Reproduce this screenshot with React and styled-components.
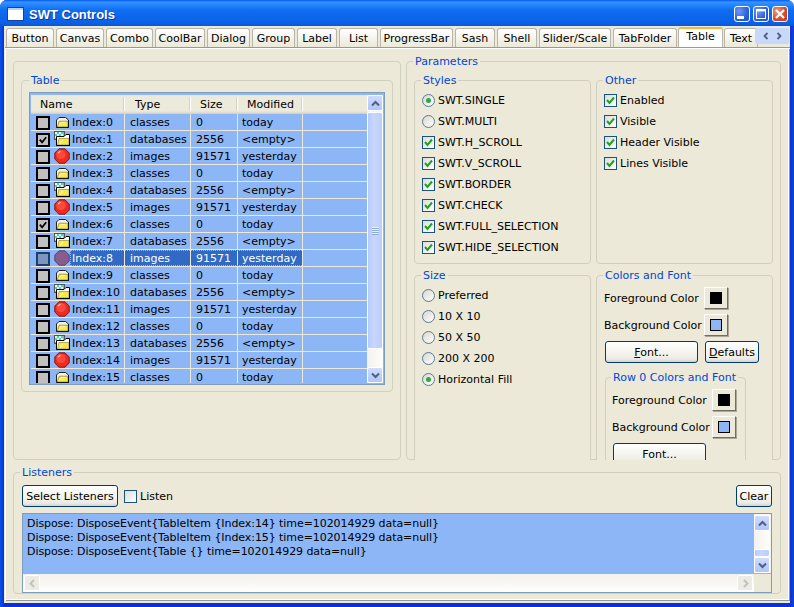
import React from 'react';
import styled, { createGlobalStyle } from 'styled-components';

const Global = createGlobalStyle`
  html, body { margin: 0; padding: 0; background: #fff; }
  body { width: 794px; height: 607px; overflow: hidden; font: 11px/13px "DejaVu Sans", sans-serif; color: #000; }
  * { box-sizing: border-box; }
`;

const Window = styled.div`
  width: 794px; height: 607px; display: flex; flex-direction: column;
  background: linear-gradient(90deg, #0a55e4 0, #0831d9 4px, #0831d9 790px, #0a45d0 100%);
  border-radius: 7px 7px 0 0; overflow: hidden;
`;
const TitleBar = styled.div`
  height: 26px; flex: none; display: flex; align-items: center; padding: 1px 6px 0 7px;
  background: linear-gradient(180deg, #0058ee 0, #3a93ff 8%, #2a8cff 14%, #0f6cf0 40%, #0a63ea 80%, #0b5fe0 92%, #0a55d6 100%);
`;
const TitleText = styled.div`
  font: bold 13px/16px "Liberation Sans", sans-serif; color: #fff; margin: 2px 0 0 5px; text-shadow: 1px 1px 0 #0f3a9c; flex: 1;
`;
const WinButton = styled.div`
  width: 16px; height: 16px; margin-left: ${p => p.$ml}px; border: 1px solid #fff; border-radius: 3px; display: flex;
  background: ${p => p.$close ? 'radial-gradient(circle at 30% 30%, #ef9a7a, #d8482a 60%, #c13a1a)' : 'radial-gradient(circle at 30% 30%, #6f98f5, #2a5fe0 60%, #2450c8)'};
  svg { width: 14px; height: 14px; }
`;
const Client = styled.div`
  flex: 1; margin: 0 4px 4px; background: #ece9d8; display: flex; flex-direction: column; min-height: 0;
`;
const TabRow = styled.div`
  position: relative; height: 21px; flex: none; display: flex; align-items: flex-end; padding-left: 2px; overflow: hidden;
`;
const Tab = styled.div`
  flex: none; width: ${p => p.$w}px; height: ${p => p.$active ? 21 : 19}px; text-align: center; line-height: ${p => p.$active ? 16 : 20}px; white-space: nowrap;
  margin-right: ${p => p.$active ? 1 : 2}px; margin-left: ${p => p.$active ? -1 : 0}px; border-radius: 3px 3px 0 0;
  border: 1px solid #b8b6a8; border-bottom: none; position: relative; z-index: ${p => p.$active ? 1 : 0};
  background: ${p => p.$active ? '#fff' : 'linear-gradient(180deg, #fff 0, #f7f6f0 40%, #ece9d8 100%)'};
  ${p => p.$active && 'border-top: 2px solid #f7b436; border-color: #f7b436 #b8b6a8 #fff; height: 20px;'}
`;
const TabScroll = styled.div`
  position: absolute; right: 1px; top: 2px; width: 34px; height: 16px; background: #c8d8fb; display: flex; align-items: center; justify-content: space-around; padding: 0 4px; z-index: 2; border-radius: 2px;
  svg { width: 6px; height: 8px; }
`;
const Panel = styled.div`
  flex: 1; margin-left: 1px; width: 785px; border-top: 1px solid #919b9c; box-shadow: inset 1px 1px 0 #fff, inset -1px -1px 0 #919b9c, inset -2px -2px 0 #fff;
  padding: 7px 0 0 8px; display: flex; flex-direction: column; margin-bottom: 2px;
`;
const TopArea = styled.div`
  display: flex; gap: 5px; height: 405px; flex: none;
`;
const Frame = styled.div`
  width: 388px; height: 399px; margin-top: 6px; border: 1px solid #d0d0bf; border-radius: 4px; padding: 12px 7px 0;
`;
const Group = styled.fieldset`
  margin: 0 0 0 ${p => p.$ml || 0}px; min-width: 0; border: 1px solid #d0d0bf; border-radius: 4px; background: #ece9d8;
  width: ${p => p.$w}px; height: ${p => p.$h}px; padding: ${p => p.$pad || '3px 7px 0'};
`;
const Legend = styled.legend`
  padding: 0 2px; margin-left: ${p => p.$lx ?? -1}px; color: #0046d5; line-height: 13px; white-space: nowrap;
`;
const ParamClip = styled.div`
  display: grid; grid-template-columns: 177px 177px; grid-template-rows: 190px auto; column-gap: 5px; row-gap: 5px; height: 386px; overflow: hidden; position: relative;
`;

const TableBox = styled.div`
  width: 356px; height: 293px; border: 1px solid #7f9db9; padding: 2px 1px 1px; background: #8db6f6; display: flex;
`;
const TableCol = styled.div`
  width: 336px; display: flex; flex-direction: column; overflow: hidden; height: 288px;
`;
const HeadRow = styled.div`
  height: 19px; flex: none; display: grid; grid-template-columns: 94px 66px 47px 65px 1fr; background: #ebeadb; box-shadow: inset 0 -1px 0 #d6d2c2, inset 0 -2px 0 #e2decd, inset 0 -3px 0 #e8e5d5;
`;
const HeadCell = styled.div`
  padding: 3px 0 0 ${p => p.$pl}px; line-height: 14px; position: relative;
  &::after { content: ''; position: absolute; right: 0; top: 2px; height: 14px; width: 2px; background: linear-gradient(90deg, #d5d2c1 50%, #fff 50%); display: ${p => p.$last ? 'none' : 'block'}; }
`;
const Row = styled.div`
  height: 17px; flex: none; display: grid; grid-template-columns: 94px 66px 47px 65px 1fr; border-bottom: 1px solid #ece9d8; position: relative;
  &::after { content: ''; position: absolute; left: 39px; width: 234px; top: 0; bottom: 0; border: 1px dotted #e8a838; display: ${p => p.$sel ? 'block' : 'none'}; pointer-events: none; }
`;
const NameCell = styled.div`
  display: flex; align-items: center; padding-left: 5px; border-right: 1px solid #ece9d8;
`;
const TableCheck = styled.div`
  width: 14px; height: 14px; flex: none; margin: 2px 4px 0 0; border: 2px solid ${p => p.$sel ? '#1b3f6e' : '#000'}; background: ${p => p.$sel ? '#7b97be' : '#c0c0c0'}; display: flex;
  svg { width: 10px; height: 10px; }
`;
const IconBox = styled.div`
  width: 16px; height: 16px; flex: none;
  svg { display: block; width: 16px; height: 16px; }
`;
const NameText = styled.div`
  flex: 1; height: 16px; line-height: 18px; padding-left: 2px; background: ${p => p.$sel ? '#316ac5' : 'none'}; color: ${p => p.$sel ? '#fff' : '#000'}; white-space: nowrap;
`;
const Cell = styled.div`
  line-height: 18px; height: 16px; padding-left: ${p => p.$pl}px; border-right: ${p => p.$last ? 'none' : '1px solid #ece9d8'}; white-space: nowrap;
  background: ${p => p.$sel ? '#316ac5' : 'none'}; color: ${p => p.$sel ? '#fff' : '#000'};
`;

const VBar = styled.div`
  width: 16px; display: flex; flex-direction: column; background: #f4f3ee;
`;
const ScrollBtn = styled.div`
  width: ${p => p.$s || 16}px; height: 16px; flex: none; border: 1px solid #fff; border-radius: 2px; display: flex; align-items: center; justify-content: center;
  background: ${p => p.$off ? '#ecebe4' : 'linear-gradient(180deg, #cfdcfd, #b0c6f8)'};
  svg { width: 9px; height: 7px; }
`;
const VThumb = styled.div`
  height: ${p => p.$h}px; margin-top: ${p => p.$mt ?? 1}px; flex: none; border: 1px solid #fff; border-radius: 2px; background: linear-gradient(90deg, #b6cafa, #c6d6fc 40%, #bccffa); display: flex; align-items: center; justify-content: center;
`;
const Grip = styled.div`
  width: 7px; height: 8px; background: repeating-linear-gradient(180deg, #eef2fe 0 1px, #8ea8dc 1px 2px);
`;
const VTrack = styled.div`
  flex: 1; background: linear-gradient(90deg, #f3f1ec, #fdfdfb);
`;

const OptRow = styled.div`
  height: 21px; display: flex; align-items: center; gap: 3px; white-space: nowrap;
`;
const CheckBox = styled.div`
  width: 13px; height: 13px; flex: none; border: 1px solid #1c5180; background: linear-gradient(135deg, #dcdcd7, #fff); display: flex;
  svg { width: 11px; height: 11px; }
`;
const RadioDot = styled.div`
  width: 13px; height: 13px; flex: none; border-radius: 50%; border: 1px solid #5a7a9c; background: linear-gradient(135deg, #d8d6cc, #fff); display: flex; align-items: center; justify-content: center;
  &::after { content: ''; width: 5px; height: 5px; border-radius: 50%; background: #2fa84a; display: ${p => p.$on ? 'block' : 'none'}; }
`;

const ColorRow = styled.div`
  height: 22px; display: flex; align-items: center; margin-bottom: 5px;
`;
const ColorLabel = styled.div`
  width: 100px; flex: none; white-space: nowrap;
`;
const SwatchBtn = styled.div`
  width: 24px; height: 22px; background: #ece9d8; border: 1px solid; border-color: #fff #716f64 #716f64 #fff; box-shadow: 1px 1px 0 #aca899; display: flex; align-items: center; justify-content: center;
`;
const Swatch = styled.div`
  width: 12px; height: 12px; border: 1px solid #000; background: ${p => p.$c};
`;
const PushBtn = styled.div`
  flex: none; width: ${p => p.$w}px; height: 22px; border: 1px solid #003c74; border-radius: 3px; text-align: center; line-height: 21px; margin-left: ${p => p.$ml || 0}px; white-space: nowrap;
  background: linear-gradient(180deg, #fff 0, #f5f4ee 50%, #ecebe3 85%, #d6d0c5 100%);
`;
const BtnRow = styled.div`
  display: flex; height: 22px; margin: 0 0 8px 1px; gap: 7px;
`;
const U = styled.span` text-decoration: underline; `;

const ListenBar = styled.div`
  display: flex; align-items: center; height: 22px; margin-bottom: 6px;
`;
const ListenLabel = styled.label`
  display: flex; align-items: center; gap: 3px; margin-left: 6px; flex: 1;
`;
const LogBox = styled.div`
  width: 750px; height: 80px; border: 1px solid #7f9db9; display: grid; grid-template-columns: 731px 17px; grid-template-rows: 60px 18px; background: #ece9d8;
`;
const LogText = styled.div`
  background: #8db6f6; padding: 3px 0 0 4px; line-height: 14px; white-space: pre; overflow: hidden; letter-spacing: -.07px;
`;
const LogV = styled.div`
  background: #f4f3ee; display: flex; flex-direction: column; padding: 1px 1px 0 0; border-bottom: 1px solid #8db6f6; background-clip: padding-box;
`;
const HBar = styled.div`
  display: flex; justify-content: space-between; align-items: center; padding: 1px; background: linear-gradient(180deg, #f3f1ec 0, #f8f7f3 50%, #fff 100%);
`;
const CornerFill = styled.div``;

const Chev = ({ d, c = '#4d6185' }) => (
  <svg viewBox="0 0 9 7"><polyline points={d} fill="none" stroke={c} strokeWidth="2" /></svg>
);
const UP = '1,5.5 4.5,2 8,5.5';
const DOWN = '1,1.5 4.5,5 8,1.5';

const Tick = ({ c = '#21a121', w = 2 }) => (
  <svg viewBox="0 0 11 11"><polyline points="2,5 4.5,8 9,2.5" fill="none" stroke={c} strokeWidth={w} /></svg>
);

const Folder = () => (
  <svg viewBox="0 0 16 16">
    <path d="M2.5 13.5 V6 L5 3.5 H11.5 L14.5 6 V13.5 Z" fill="#f4f2e6" stroke="#222" />
    <path d="M3.2 13 L5.2 7.2 H14 V13 Z" fill="#f7ea4c" stroke="#8a7a20" strokeWidth=".7" />
    <path d="M5 12 L7 8.5 H11" fill="none" stroke="#fff9a8" />
    <path d="M14.5 6 V13.5 H2.5" fill="none" stroke="#111" />
  </svg>
);
const DbFolder = () => (
  <svg viewBox="0 0 16 16">
    <rect x=".5" y=".5" width="10" height="8" fill="#4fc8f0" stroke="#555" />
    <path d="M1 1h2v2h-2zM5 1h2v2h-2zM3 3h2v2h-2zM7 3h2v2h-2zM1 5h2v2h-2zM5 5h2v2h-2z" fill="#e8ffc0" />
    <path d="M2.5 5.5 H10 L12 3.5 H15.5 V14.5 H2.5 Z" fill="#fff" stroke="#000" />
    <path d="M3.5 14 L5 7.5 H15 V14 Z" fill="#f6e84a" stroke="#8a7a20" strokeWidth=".6" />
    <path d="M6 13 L9 8.5" stroke="#fff9a8" strokeWidth="1.2" />
    <path d="M15.5 4 V14.5 H2.5" fill="none" stroke="#000" />
  </svg>
);
const Ball = ({ sel }) => (
  <svg viewBox="0 0 16 16">
    <path d="M5 .8 H11 L15.2 5 V11 L11 15.2 H5 L.8 11 V5 Z" fill={sel ? '#8a5c8c' : '#f02a20'} stroke={sel ? '#4a4a80' : '#7a1a1a'} strokeWidth="1" />
    {!sel && <circle cx="7" cy="6.5" r="4.6" fill="#ff4a3a" />}
    {!sel && <path d="M4 5 L6.5 3" stroke="#ffb0a0" strokeWidth="1.2" />}
  </svg>
);
const kinds = [
  { Icon: Folder, type: 'classes', size: '0', mod: 'today' },
  { Icon: DbFolder, type: 'databases', size: '2556', mod: '<empty>' },
  { Icon: Ball, type: 'images', size: '91571', mod: 'yesterday' },
];
const checked = [1, 6];
const rows = Array.from({ length: 16 }, (_, i) => ({ i, ...kinds[i % 3] }));

const tabs = [
  ['Button', 48], ['Canvas', 48], ['Combo', 47], ['CoolBar', 50], ['Dialog', 43], ['Group', 43], ['Label', 40], ['List', 39],
  ['ProgressBar', 73], ['Sash', 40], ['Shell', 40], ['Slider/Scale', 72], ['TabFolder', 64], ['Table', 45, true], ['Text', 34],
];

const Check = ({ label }) => (
  <OptRow><CheckBox><Tick /></CheckBox>{label}</OptRow>
);
const Radio = ({ label, on }) => (
  <OptRow><RadioDot $on={on} />{label}</OptRow>
);
const ColorLine = ({ label, color }) => (
  <ColorRow>
    <ColorLabel>{label}</ColorLabel>
    <SwatchBtn><Swatch $c={color} /></SwatchBtn>
  </ColorRow>
);

export default function App() {
  return (
    <Window>
      <Global />
      <TitleBar>
        <svg width="17" height="14" viewBox="0 0 17 14">
          <rect x=".5" y=".5" width="16" height="13" fill="#fff" stroke="#1a3f9c" />
          <rect x="1" y="1" width="15" height="2" fill="#b8d0f8" />
        </svg>
        <TitleText>SWT Controls</TitleText>
        <WinButton $ml={0}>
          <svg viewBox="0 0 14 14"><rect x="2" y="9" width="7" height="3" fill="#fff" /></svg>
        </WinButton>
        <WinButton $ml={3}>
          <svg viewBox="0 0 14 14"><rect x="2.5" y="3" width="9" height="8.5" fill="none" stroke="#fff" /><rect x="2" y="2" width="10" height="2.4" fill="#fff" /></svg>
        </WinButton>
        <WinButton $ml={3} $close>
          <svg viewBox="0 0 14 14"><path d="M3 3 L11 11 M11 3 L3 11" stroke="#fff" strokeWidth="2.2" /></svg>
        </WinButton>
      </TitleBar>
      <Client>
        <TabRow>
          {tabs.map(([t, w, a]) => <Tab key={t} $w={w} $active={a}>{t}</Tab>)}
          <TabScroll>
            <svg viewBox="0 0 8 10"><polyline points="6,1 2,5 6,9" fill="none" stroke="#4d6185" strokeWidth="2.4" /></svg>
            <svg viewBox="0 0 8 10"><polyline points="2,1 6,5 2,9" fill="none" stroke="#4d6185" strokeWidth="2.4" /></svg>
          </TabScroll>
        </TabRow>
        <Panel>
          <TopArea>
            <Frame>
              <Group $w={372} $h={318} $pad="5px 7px 0">
                <Legend $lx={0}>Table</Legend>
                <TableBox>
                  <TableCol>
                    <HeadRow>
                      <HeadCell $pl={9}>Name</HeadCell>
                      <HeadCell $pl={10}>Type</HeadCell>
                      <HeadCell $pl={9}>Size</HeadCell>
                      <HeadCell $pl={9}>Modified</HeadCell>
                      <HeadCell $last />
                    </HeadRow>
                    {rows.map(({ i, Icon, type, size, mod }) => {
                      const sel = i === 8;
                      return (
                        <Row key={i} $sel={sel}>
                          <NameCell>
                            <TableCheck $sel={sel}>{checked.includes(i) && <Tick c="#000" />}</TableCheck>
                            <IconBox><Icon sel={sel} /></IconBox>
                            <NameText $sel={sel}>Index:{i}</NameText>
                          </NameCell>
                          <Cell $pl={5} $sel={sel}>{type}</Cell>
                          <Cell $pl={5} $sel={sel}>{size}</Cell>
                          <Cell $pl={4} $sel={sel}>{mod}</Cell>
                          <Cell $last />
                        </Row>
                      );
                    })}
                  </TableCol>
                  <VBar>
                    <ScrollBtn><Chev d={UP} /></ScrollBtn>
                    <VThumb $h={237}><Grip /></VThumb>
                    <VTrack />
                    <ScrollBtn><Chev d={DOWN} /></ScrollBtn>
                  </VBar>
                </TableBox>
              </Group>
            </Frame>
            <Group $w={375} $h={405} $pad="6px 7px 0">
              <Legend>Parameters</Legend>
              <ParamClip>
                <Group $w={177} $h={190}>
                  <Legend>Styles</Legend>
                  <Radio label="SWT.SINGLE" on />
                  <Radio label="SWT.MULTI" />
                  <Check label="SWT.H_SCROLL" />
                  <Check label="SWT.V_SCROLL" />
                  <Check label="SWT.BORDER" />
                  <Check label="SWT.CHECK" />
                  <Check label="SWT.FULL_SELECTION" />
                  <Check label="SWT.HIDE_SELECTION" />
                </Group>
                <Group $w={177} $h={190}>
                  <Legend>Other</Legend>
                  <Check label="Enabled" />
                  <Check label="Visible" />
                  <Check label="Header Visible" />
                  <Check label="Lines Visible" />
                </Group>
                <Group $w={177} $h={200}>
                  <Legend>Size</Legend>
                  <Radio label="Preferred" />
                  <Radio label="10 X 10" />
                  <Radio label="50 X 50" />
                  <Radio label="200 X 200" />
                  <Radio label="Horizontal Fill" on />
                </Group>
                <Group $w={177} $h={200} $pad="5px 7px 0">
                  <Legend>Colors and Font</Legend>
                  <ColorLine label="Foreground Color" color="#000" />
                  <ColorLine label="Background Color" color="#8db6f6" />
                  <BtnRow>
                    <PushBtn $w={93}><U>F</U>ont...</PushBtn>
                    <PushBtn $w={54}><U>D</U>efaults</PushBtn>
                  </BtnRow>
                  <Group $w={141} $h={110} $pad="5px 6px 0" $ml={1}>
                    <Legend>Row 0 Colors and Font</Legend>
                    <ColorLine label="Foreground Color" color="#000" />
                    <ColorLine label="Background Color" color="#8db6f6" />
                    <PushBtn $w={93} $ml={1}>Font...</PushBtn>
                  </Group>
                </Group>
              </ParamClip>
            </Group>
          </TopArea>
          <ListenersSpacer />
          <Group $w={768} $h={128} $pad="6px 8px 0">
            <Legend $lx={-2}>Listeners</Legend>
            <ListenBar>
              <PushBtn $w={96}>Select Listeners</PushBtn>
              <ListenLabel><CheckBox />Listen</ListenLabel>
              <PushBtn $w={36}>Clear</PushBtn>
            </ListenBar>
            <LogBox>
              <LogText>{`Dispose: DisposeEvent{TableItem {Index:14} time=102014929 data=null}
Dispose: DisposeEvent{TableItem {Index:15} time=102014929 data=null}
Dispose: DisposeEvent{Table {} time=102014929 data=null}`}</LogText>
              <LogV>
                <ScrollBtn><Chev d={UP} /></ScrollBtn>
                <VTrack />
                <VThumb $h={8} $mt={0} />
                <ScrollBtn><Chev d={DOWN} /></ScrollBtn>
              </LogV>
              <HBar>
                <ScrollBtn $off>
                  <svg viewBox="0 0 9 9" style={{ height: 9 }}><polyline points="6,1 2.5,4.5 6,8" fill="none" stroke="#c3c3b8" strokeWidth="2" /></svg>
                </ScrollBtn>
                <ScrollBtn $off>
                  <svg viewBox="0 0 9 9" style={{ height: 9 }}><polyline points="3,1 6.5,4.5 3,8" fill="none" stroke="#c3c3b8" strokeWidth="2" /></svg>
                </ScrollBtn>
              </HBar>
              <CornerFill />
            </LogBox>
          </Group>
        </Panel>
      </Client>
    </Window>
  );
}

const ListenersSpacer = styled.div`
  height: 6px; flex: none;
`;
